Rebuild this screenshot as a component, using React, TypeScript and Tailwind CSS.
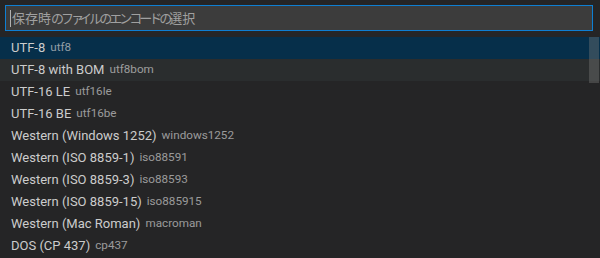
import React from "react";

const items: [string, string][] = [
  ["UTF-8", "utf8"],
  ["UTF-8 with BOM", "utf8bom"],
  ["UTF-16 LE", "utf16le"],
  ["UTF-16 BE", "utf16be"],
  ["Western (Windows 1252)", "windows1252"],
  ["Western (ISO 8859-1)", "iso88591"],
  ["Western (ISO 8859-3)", "iso88593"],
  ["Western (ISO 8859-15)", "iso885915"],
  ["Western (Mac Roman)", "macroman"],
  ["DOS (CP 437)", "cp437"],
];

const placeholder = "保存時のファイルのエンコードの選択";
const kanji = "保存時選択";

function charClass(c: string) {
  if (kanji.includes(c)) return "";
  if (c === "ァ") return "tracking-[-5px]";
  return "tracking-[-3px]";
}

export default function App() {
  return (
    <div className="w-[600px] h-[258px] bg-[#252526] overflow-hidden relative font-['Roboto','Noto_Sans_CJK_JP',sans-serif]">
      <div className="pt-[5px] pl-[5px] pr-[7px]">
        <div className="h-[26px] border border-[#0e7fd3] bg-[#3c3c3c] flex items-center pl-[4px]">
          <div className="w-px h-[17px] bg-[#b0b0b0]" />
          <div className="ml-[1px] text-[13px] leading-[18px] text-[#a0a0a0] whitespace-nowrap font-['Noto_Sans_CJK_JP',sans-serif]">
            {placeholder.split("").map((c, i) => (
              <span key={i} className={charClass(c)}>
                {c}
              </span>
            ))}
          </div>
        </div>
      </div>
      <div className="mt-[6px] relative">
        {items.map(([label, desc], i) => (
          <div
            key={label}
            className={
              "h-[22px] flex items-center pl-[11px] whitespace-nowrap " +
              (i === 0 ? "bg-[#062f4a]" : i === 1 ? "bg-[#2a2d2e]" : "")
            }
          >
            <span className="text-[13px] text-[#cccccc]">{label}</span>
            <span className="text-[11.7px] text-[#cccccc] opacity-70 ml-[5px]">{desc}</span>
          </div>
        ))}
        <div className="absolute top-0 left-[589px] w-[10px] h-[46px] bg-[rgba(121,121,121,0.4)]" />
      </div>
    </div>
  );
}
